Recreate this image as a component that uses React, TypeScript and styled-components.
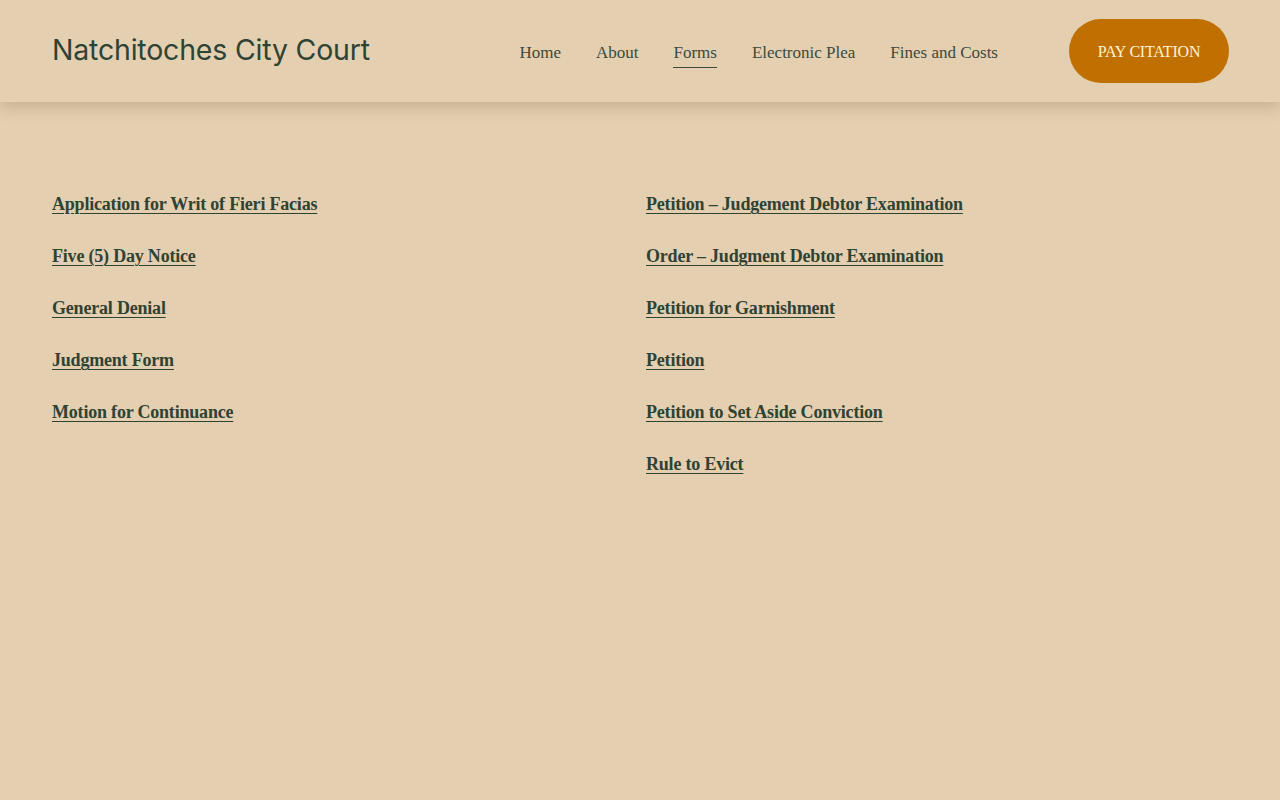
import React from "react";
import styled, { createGlobalStyle } from "styled-components";

const GlobalStyle = createGlobalStyle`
  html, body {
    margin: 0;
    padding: 0;
    background: #e5cfb1;
  }
  body {
    font-family: "Liberation Serif", serif;
    color: #2f4333;
  }
`;

const Page = styled.div`
  min-height: 800px;
  background: #e5cfb1;
`;

const Header = styled.header`
  display: flex;
  align-items: center;
  justify-content: space-between;
  height: 102px;
  padding: 0 51px 0 52px;
  box-sizing: border-box;
  background: #e5cfb1;
  box-shadow: 0 6px 14px rgba(120, 100, 70, 0.28);
  position: relative;
  z-index: 1;
`;

const Title = styled.a`
  font-family: Inter, "Noto Sans", sans-serif;
  font-size: 28.5px;
  font-weight: 400;
  letter-spacing: -0.2px;
  color: #2f4333;
  text-decoration: none;
  margin-top: -3px;
`;

const Right = styled.div`
  display: flex;
  align-items: center;
  gap: 71px;
`;

const Nav = styled.nav`
  display: flex;
  align-items: center;
  gap: 35px;
`;

const NavLink = styled.a<{ $active?: boolean }>`
  font-family: "Liberation Serif", serif;
  font-size: 17px;
  color: #3d4a3c;
  text-decoration: none;
  padding: 6px 0 4px;
  border-bottom: 1px solid ${(p) => (p.$active ? "#3d4a3c" : "transparent")};
  margin-top: 2px;
`;

const PayButton = styled.a`
  display: flex;
  align-items: center;
  justify-content: center;
  width: 160px;
  height: 64px;
  padding-top: 2px;
  box-sizing: border-box;
  border-radius: 32px;
  background: #bf7000;
  color: #fff3d6;
  font-family: "Liberation Serif", serif;
  font-size: 16px;
  text-decoration: none;
  letter-spacing: -0.2px;
`;

const Content = styled.main`
  display: grid;
  grid-template-columns: 1fr 1fr;
  column-gap: 12px;
  padding: 89px 52px 0;
`;

const Column = styled.ul`
  list-style: none;
  margin: 0;
  padding: 0;
  display: flex;
  flex-direction: column;
  gap: 26px;
`;

const Item = styled.li`
  display: flex;
  align-items: center;
  height: 26px;
`;

const FormLink = styled.a`
  font-family: "Liberation Serif", serif;
  font-size: 18px;
  line-height: 26px;
  font-weight: 700;
  color: #2f4333;
  text-decoration: underline;
  text-underline-offset: 3px;
  text-decoration-thickness: 1px;
  letter-spacing: -0.2px;
`;

const left = [
  "Application for Writ of Fieri Facias",
  "Five (5) Day Notice",
  "General Denial",
  "Judgment Form",
  "Motion for Continuance",
];

const right = [
  "Petition – Judgement Debtor Examination",
  "Order – Judgment Debtor Examination",
  "Petition for Garnishment",
  "Petition",
  "Petition to Set Aside Conviction",
  "Rule to Evict",
];

const navItems = ["Home", "About", "Forms", "Electronic Plea", "Fines and Costs"];

export default function App() {
  return (
    <Page>
      <GlobalStyle />
      <Header>
        <Title href="#">Natchitoches City Court</Title>
        <Right>
          <Nav>
            {navItems.map((n) => (
              <NavLink key={n} href="#" $active={n === "Forms"}>
                {n}
              </NavLink>
            ))}
          </Nav>
          <PayButton href="#">PAY CITATION</PayButton>
        </Right>
      </Header>
      <Content>
        <Column>
          {left.map((t) => (
            <Item key={t}>
              <FormLink href="#">{t}</FormLink>
            </Item>
          ))}
        </Column>
        <Column>
          {right.map((t) => (
            <Item key={t}>
              <FormLink href="#">{t}</FormLink>
            </Item>
          ))}
        </Column>
      </Content>
    </Page>
  );
}
